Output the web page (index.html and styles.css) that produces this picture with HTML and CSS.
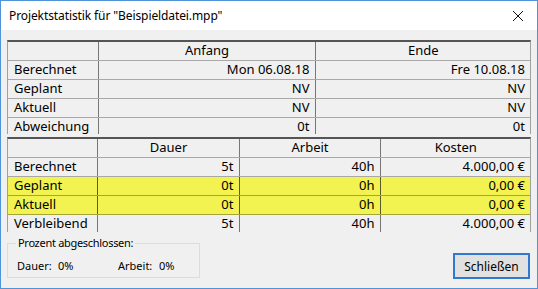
FILE: index.html
```html
<!DOCTYPE html>
<html lang="de">
<head>
<meta charset="utf-8">
<title>Projektstatistik</title>
<link rel="stylesheet" href="styles.css">
</head>
<body>
<div class="window">
  <div class="titlebar">
    <span class="title">Projektstatistik für "Beispieldatei.mpp"</span>
    <svg class="close" width="12" height="12" viewBox="0 0 12 12"><path d="M1 1 L11 11 M11 1 L1 11" stroke="#111" stroke-width="1" fill="none"/></svg>
  </div>
  <div class="content">
    <div class="grid grid1">
      <table>
        <colgroup><col style="width:90px"><col style="width:217px"><col></colgroup>
        <tr class="head"><td></td><td>Anfang</td><td>Ende</td></tr>
        <tr><td>Berechnet</td><td>Mon 06.08.18</td><td>Fre 10.08.18</td></tr>
        <tr><td>Geplant</td><td>NV</td><td>NV</td></tr>
        <tr><td>Aktuell</td><td>NV</td><td>NV</td></tr>
        <tr><td>Abweichung</td><td>0t</td><td>0t</td></tr>
      </table>
    </div>
    <div class="grid grid2">
      <table>
        <colgroup><col style="width:89px"><col style="width:142px"><col style="width:141px"><col></colgroup>
        <tr class="head"><td></td><td>Dauer</td><td>Arbeit</td><td>Kosten</td></tr>
        <tr><td>Berechnet</td><td>5t</td><td>40h</td><td>4.000,00 €</td></tr>
        <tr class="hl"><td>Geplant</td><td>0t</td><td>0h</td><td>0,00 €</td></tr>
        <tr class="hl"><td>Aktuell</td><td>0t</td><td>0h</td><td>0,00 €</td></tr>
        <tr><td>Verbleibend</td><td>5t</td><td>40h</td><td>4.000,00 €</td></tr>
      </table>
    </div>
    <div class="bottom">
      <fieldset class="group">
        <legend>Prozent abgeschlossen:</legend>
        <div class="pct">
          <span class="lbl">Dauer:</span><span class="val">0%</span>
          <span class="lbl lbl2">Arbeit:</span><span class="val">0%</span>
        </div>
      </fieldset>
      <button class="btn">Schließen</button>
    </div>
  </div>
</div>
</body>
</html>
```
FILE: styles.css
```css
* { box-sizing: border-box; }
html, body { margin: 0; padding: 0; }
body {
  font-family: "Noto Sans", "Open Sans", sans-serif;
  color: #000;
  background: #f0f0f0;
}
.window {
  width: 538px;
  height: 289px;
  border: 1px solid #4f94d8;
  background: #f0f0f0;
  display: flex;
  flex-direction: column;
}
.titlebar {
  height: 29px;
  background: #fff;
  display: flex;
  align-items: center;
  justify-content: space-between;
  padding: 0 13px 0 8px;
}
.title {
  font-size: 12px;
  line-height: 16px;
  letter-spacing: -0.1px;
}
.close { display: block; }
.content {
  flex: 1;
  padding: 10px 6px 0 6px;
  display: flex;
  flex-direction: column;
}
.grid {
  width: 524px;
  overflow: hidden;
  border-top: 2px solid #555;
  border-left: 1px solid #a0a0a0;
  border-right: 1px solid #a0a0a0;
}
.grid1 { height: 94px; }
.grid2 { height: 95px; margin-top: 3px; }
table {
  border-collapse: collapse;
  table-layout: fixed;
  width: 522px;
  font-size: 13px;
}
td {
  height: 19px;
  padding: 0 5px 0 6px;
  line-height: 17px;
  border-bottom: 1px solid #a8a8a8;
  border-right: 1px solid #777;
  text-align: right;
  white-space: nowrap;
  overflow: hidden;
}
td:first-child { text-align: left; }
td:last-child { border-right: none; }
tr.head td { text-align: center; height: 18px; }
tr.hl td {
  background: #f2f250;
  border-bottom-color: #a5a53a;
  border-right-color: #5a5a2a;
}
.bottom {
  margin-top: 4px;
  display: flex;
  justify-content: space-between;
  align-items: flex-end;
}
.group {
  margin: 0 0 1px 0;
  width: 193px;
  height: 42px;
  border: 1px solid #dcdcdc;
  padding: 0 0 0 9px;
  font-size: 11px;
}
.group legend {
  padding: 0 2px;
  margin-left: -1px;
  font-size: 11px;
  letter-spacing: -0.3px;
  line-height: 14px;
}
.pct {
  display: flex;
  align-items: center;
  padding-top: 9px;
  line-height: 14px;
}
.lbl { width: 41px; }
.lbl2 { margin-left: 41px; }
.val { width: 19px; }
.btn {
  width: 77px;
  height: 26px;
  margin-right: 1px;
  border: 2px solid #2f7ad0;
  background: #e1e1e1;
  font-family: inherit;
  font-size: 12px;
  color: #000;
  padding: 0;
}
```
